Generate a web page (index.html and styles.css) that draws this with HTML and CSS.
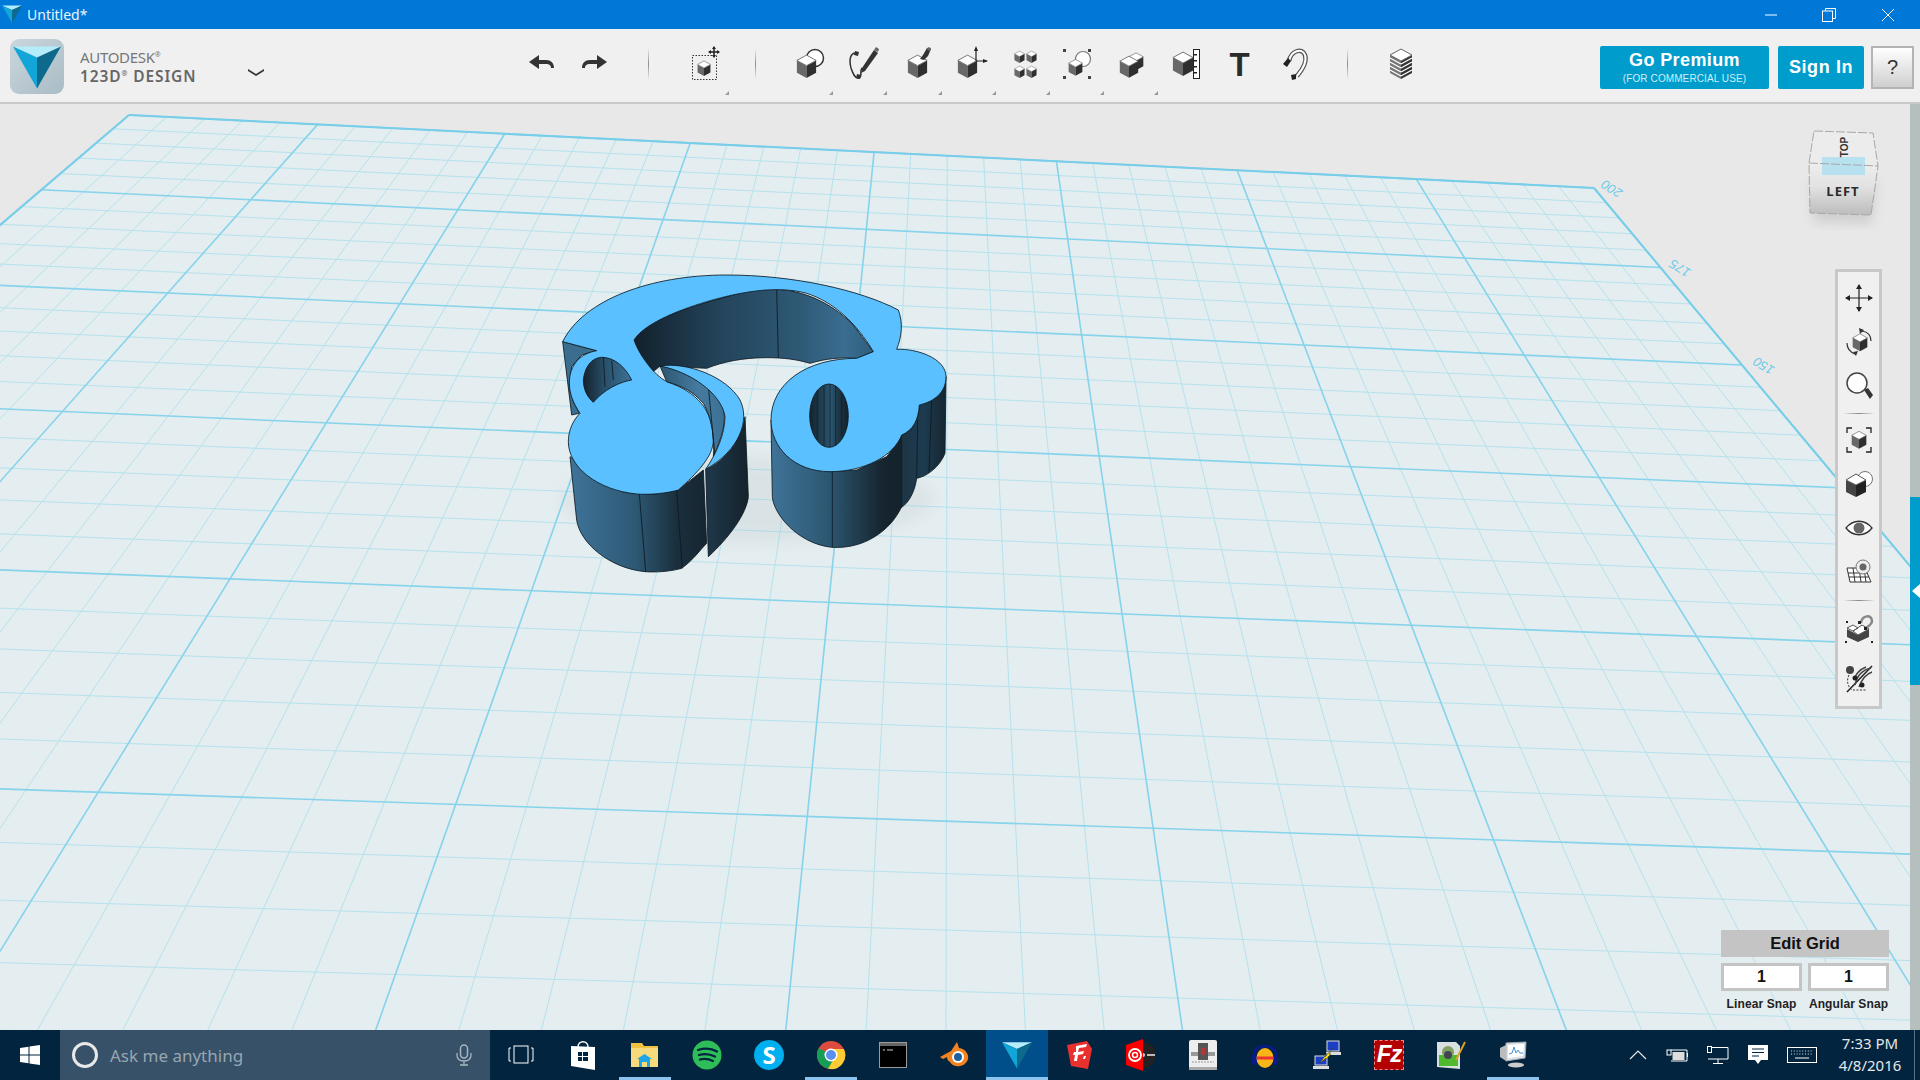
FILE: index.html
```html
<!DOCTYPE html>
<html lang="en">
<head>
<meta charset="utf-8">
<title>Untitled* - 123D Design</title>
<link rel="stylesheet" href="styles.css">
</head>
<body>
<svg class="defs" aria-hidden="true">
  <defs>
    <symbol id="cube" viewBox="0 0 24 28">
      <path d="M1 7 12 13V27L1 21Z" fill="#686868"/>
      <path d="M23 7 12 13V27L23 21Z" fill="#2f2f2f"/>
      <path d="M12 1 23 7 12 13 1 7Z" fill="#fff" stroke="#666" stroke-width="1"/>
    </symbol>
    <symbol id="logo" viewBox="0 0 40 40">
      <path d="M0 3H40L20 12Z" fill="#b5ecfa"/>
      <path d="M0 3 20 12V38Z" fill="#12a5d8"/>
      <path d="M40 3 20 12V38Z" fill="#0d6a8c"/>
    </symbol>
    <linearGradient id="wallA" gradientUnits="userSpaceOnUse" x1="90" y1="0" x2="520" y2="0">
      <stop offset="0" stop-color="#3f7398"/><stop offset=".45" stop-color="#2e5975"/><stop offset=".75" stop-color="#1a2e3c"/><stop offset="1" stop-color="#16252f"/>
    </linearGradient>
    <linearGradient id="wallB" gradientUnits="userSpaceOnUse" x1="490" y1="0" x2="625" y2="0">
      <stop offset="0" stop-color="#1f3a4c"/><stop offset="1" stop-color="#15222c"/>
    </linearGradient>
    <linearGradient id="wallC" gradientUnits="userSpaceOnUse" x1="693" y1="0" x2="1085" y2="0">
      <stop offset="0" stop-color="#3f7398"/><stop offset=".45" stop-color="#2c5670"/><stop offset=".85" stop-color="#16252f"/><stop offset="1" stop-color="#14222c"/>
    </linearGradient>
    <linearGradient id="wallD" gradientUnits="userSpaceOnUse" x1="1085" y1="0" x2="1218" y2="0">
      <stop offset="0" stop-color="#1d3546"/><stop offset=".5" stop-color="#1d3b4f"/><stop offset="1" stop-color="#16252f"/>
    </linearGradient>
    <linearGradient id="wallBack" gradientUnits="userSpaceOnUse" x1="282" y1="0" x2="1000" y2="0">
      <stop offset="0" stop-color="#12202b"/><stop offset=".35" stop-color="#23435a"/><stop offset=".7" stop-color="#2f5a76"/><stop offset=".88" stop-color="#3a6d90"/><stop offset="1" stop-color="#2f5f7d"/>
    </linearGradient>
    <linearGradient id="holeA" gradientUnits="userSpaceOnUse" x1="130" y1="0" x2="275" y2="0">
      <stop offset="0" stop-color="#14222c"/><stop offset=".45" stop-color="#28506a"/><stop offset="1" stop-color="#3e7295"/>
    </linearGradient>
    <linearGradient id="holeB" gradientUnits="userSpaceOnUse" x1="809" y1="0" x2="925" y2="0">
      <stop offset="0" stop-color="#14222c"/><stop offset=".55" stop-color="#2b5672"/><stop offset=".75" stop-color="#1d3647"/><stop offset="1" stop-color="#14222c"/>
    </linearGradient>
    <linearGradient id="inner" gradientUnits="userSpaceOnUse" x1="360" y1="0" x2="555" y2="0">
      <stop offset="0" stop-color="#2c5670"/><stop offset=".6" stop-color="#457ba0"/><stop offset="1" stop-color="#3c7093"/>
    </linearGradient>
    <linearGradient id="cubeFace" x1="0" y1="0" x2="0" y2="1">
      <stop offset="0" stop-color="#eeeeee"/><stop offset=".45" stop-color="#e2e2e2"/><stop offset="1" stop-color="#bcbcbc"/>
    </linearGradient>
    <filter id="soft" x="-30%" y="-30%" width="160%" height="160%"><feGaussianBlur stdDeviation="22"/></filter>
    <filter id="softS" x="-30%" y="-30%" width="160%" height="160%"><feGaussianBlur stdDeviation="6"/></filter>
  </defs>
</svg>

<div class="app">
  <header class="titlebar">
    <svg class="title-logo"><use href="#logo"/></svg>
    <span class="title-text">Untitled*</span>
    <div class="win-controls">
      <button class="win-btn"><svg width="14" height="14" viewBox="0 0 14 14"><path d="M1 7H13" stroke="#fff"/></svg></button>
      <button class="win-btn"><svg width="14" height="14" viewBox="0 0 14 14" fill="none" stroke="#fff"><path d="M3.500 2.500V.5H13.500V10.500H11"/><rect x=".5" y="3" width="10" height="10.500"/></svg></button>
      <button class="win-btn"><svg width="14" height="14" viewBox="0 0 14 14"><path d="M1 1 13 13M13 1 1 13" stroke="#fff"/></svg></button>
    </div>
  </header>

  <nav class="toolbar">
    <div class="brand">
      <div class="brand-mark"><svg class="brand-logo"><use href="#logo"/></svg></div>
      <div class="brand-text">
        <span class="brand-top">AUTODESK<sup>®</sup></span>
        <span class="brand-bottom">123D<sup>®</sup> DESIGN</span>
      </div>
      <svg class="brand-chevron" width="18" height="10" viewBox="0 0 18 10"><path d="M1 2 9 7 17 2 17 4 9 9 1 4Z" fill="#333"/></svg>
    </div>

    <div class="history">
      <svg width="28" height="18" viewBox="0 0 28 18"><path d="M1 8 11 1V6H18C23 6 26 9 26 14H23C23 11 21 10 18 10H11V15Z" fill="#333"/></svg>
      <svg width="28" height="18" viewBox="0 0 28 18"><path d="M27 8 17 1V6H10C5 6 2 9 2 14H5C5 11 7 10 10 10H17V15Z" fill="#333"/></svg>
    </div>
    <i class="sep sep-a"></i>
    <button class="tool tool-transform">
      <svg width="36" height="36" viewBox="0 0 36 36">
        <rect x="5.500" y="9.500" width="24" height="24" fill="none" stroke="#333" stroke-dasharray="1.500 1.500"/>
        <use href="#cube" x="10" y="14" width="14" height="17"/>
        <path d="M22 6H32M27 1V11" stroke="#222" stroke-width="1.500"/>
        <path d="M27 0 29 3H25ZM27 12 29 9H25ZM21 6 24 4V8ZM33 6 30 4V8Z" fill="#222"/>
      </svg>
      <i class="corner"></i>
    </button>
    <i class="sep"></i>

    <div class="tools">
      <button class="tool nudge"><svg width="36" height="36" viewBox="0 0 36 36"><circle cx="23" cy="12" r="8.500" fill="#fff" stroke="#333" stroke-width="1.500"/><use href="#cube" x="4" y="7" width="21" height="27"/></svg><i class="corner"></i></button>
      <button class="tool nudge"><svg width="36" height="36" viewBox="0 0 36 36"><path d="M10 7C4 7 3 14 5 22 7 28 9 33 13 32 17 30 13 26 16 22" fill="none" stroke="#333" stroke-width="1.500"/><path d="M9 5 13 6 12 10 8 9ZM11 28 15 29 14 33 10 32Z" fill="#333"/><path d="M28 4 32 7 19 25 15 27 16 22Z" fill="#333"/><path d="M30 1 33 3 32 6 28 4Z" fill="#666"/></svg><i class="corner"></i></button>
      <button class="tool nudge"><svg width="36" height="36" viewBox="0 0 36 36"><use href="#cube" x="7" y="7" width="21" height="27"/><path d="M20 13 23 9 27 2 31 3 28 10 24 14Z" fill="#333"/><path d="M28 1 31 2 30 5 27 4Z" fill="#666"/></svg><i class="corner"></i></button>
      <button class="tool nudge-s"><svg width="36" height="36" viewBox="0 0 36 36"><use href="#cube" x="4" y="7" width="21" height="27"/><path d="M23 2V15M23 15H34" stroke="#222" stroke-width="1.200"/><path d="M23 0 25 5H21ZM35 15 30 13V17Z" fill="#222"/></svg><i class="corner"></i></button>
      <button class="tool nudge-s"><svg width="36" height="36" viewBox="0 0 36 36"><use href="#cube" x="7" y="4" width="11" height="14"/><use href="#cube" x="19" y="4" width="11" height="14"/><use href="#cube" x="7" y="19" width="11" height="14"/><use href="#cube" x="19" y="19" width="11" height="14"/></svg><i class="corner"></i></button>
      <button class="tool"><svg width="36" height="36" viewBox="0 0 36 36"><circle cx="24" cy="13" r="7.500" fill="#fff" stroke="#777" stroke-width="1.200"/><use href="#cube" x="9" y="12" width="15" height="19"/><path d="M4 3h3v3h-3ZM29 3h3v3h-3ZM4 30h3v3h-3ZM29 30h3v3h-3Z" fill="#444"/></svg><i class="corner"></i></button>
      <button class="tool"><svg width="36" height="36" viewBox="0 0 36 36"><use href="#cube" x="15" y="4" width="16" height="23"/><use href="#cube" x="6" y="8" width="20" height="26"/></svg><i class="corner"></i></button>
      <button class="tool"><svg width="36" height="36" viewBox="0 0 36 36"><use href="#cube" x="5" y="2" width="22" height="32"/><rect x="26.500" y="3.500" width="6" height="29" fill="#fff" stroke="#222"/><path d="M27 8h3v1.500h-3ZM27 14h3v1.500h-3ZM27 20h3v1.500h-3ZM27 26h3v1.500h-3Z" fill="#222"/></svg></button>
      <button class="tool tool-text"><span>T</span></button>
      <button class="tool"><svg width="36" height="36" viewBox="0 0 36 36"><path d="M13 15C15 5 26 1 29 9 31 15 27 23 21 30" fill="none" stroke="#555" stroke-width="4.500"/><path d="M13 15C15 5 26 1 29 9 31 15 27 23 21 30" fill="none" stroke="#fff" stroke-width="2"/><path d="M7 18 12 12 15 15 11 21ZM15 29 20 28 20 33 16 34Z" fill="#222"/></svg></button>
    </div>
    <i class="sep sep-c"></i>
    <button class="tool tool-material">
      <svg width="36" height="36" viewBox="0 0 36 36"><path d="M7 9 18 15V33L7 27Z" fill="#777"/><path d="M29 9 18 15V33L29 27Z" fill="#333"/><path d="M7 12 18 18M7 16 18 22M7 20 18 26M7 24 18 30M29 12 18 18M29 16 18 22M29 20 18 26M29 24 18 30" stroke="#fff" stroke-width="1.300"/><path d="M18 3 29 9 18 15 7 9Z" fill="#fff" stroke="#666"/></svg>
    </button>

    <div class="account">
      <a class="btn-premium"><b>Go Premium</b><small>(FOR COMMERCIAL USE)</small></a>
      <a class="btn-signin">Sign In</a>
      <a class="btn-help">?</a>
    </div>
  </nav>

  <main class="workspace">
    <section class="viewport">
      <svg id="grid" class="grid" viewBox="0 104 1910 926" width="1910" height="926" aria-hidden="true"></svg>

      <svg class="model" viewBox="0 0 1260 960" width="420" height="320">
        <ellipse cx="620" cy="720" rx="560" ry="130" fill="#8fa0a6" opacity=".12" filter="url(#soft)"/>
        <g stroke="#0d1820" stroke-width="2.500" stroke-linejoin="round">
          <path fill="#3a6d8e" d="M68 245 170 272 125 285 95 320 88 380 100 425 118 460 95 465Z"/>
          <path fill="url(#wallBack)" d="M282 240 310 205C370 165 480 130 600 100 650 90 690 88 710 88 790 92 870 125 940 195L1000 275 950 295C900 292 860 295 810 310 770 298 730 293 680 293 610 293 550 305 500 325L360 318 340 335 300 280Z"/>
          <path fill="none" d="M710 88 715 293"/>
          <path fill="url(#wallB)" d="M497 628C540 610 600 560 615 470L625 710C620 760 570 830 505 890Z"/>
          <path fill="url(#wallA)" d="M90 590 110 780C120 850 210 925 315 935 360 938 400 932 425 925 460 900 480 870 500 850L490 630 415 690 340 703 250 697 170 660 110 605Z"/>
          <path fill="none" d="M298 700 317 935M410 692 427 925"/>
          <path fill="url(#wallC)" d="M693 480 697 710C700 760 770 850 875 862 970 868 1050 815 1085 740V530L1040 590 950 630 870 635 780 610 715 550Z"/>
          <path fill="none" d="M877 635V862"/>
          <path fill="url(#wallD)" d="M1085 525C1120 510 1135 480 1138 435 1180 425 1215 400 1218 350L1215 580C1200 620 1160 650 1130 655 1125 690 1110 725 1085 742Z"/>
          <path fill="none" d="M1133 480 1130 655M1175 420 1167 637"/>
          <path fill="#5ac0ff" d="M68 245C130 120 330 45 560 45 760 45 960 90 1075 150 1090 190 1085 230 1070 268 1130 265 1218 295 1218 350 1218 400 1180 425 1138 435 1135 480 1120 510 1085 525 1060 590 970 635 870 635 760 635 693 560 693 480 693 370 800 295 950 295L1000 275C950 190 880 125 800 100 720 78 620 90 500 125 400 155 310 195 282 240 295 280 340 345 380 365 470 395 520 450 520 540 520 590 470 640 415 690 380 700 330 705 290 702 170 690 85 620 85 545 85 510 100 480 120 460 100 430 88 400 88 370 88 310 125 280 170 272Z"/>
          <path fill="url(#holeA)" d="M275 360C240 365 190 390 160 427 140 410 130 385 130 360 135 315 160 290 190 292 225 295 255 320 275 360Z"/>
          <path fill="none" d="M190 292 195 380M215 302 220 360"/>
          <ellipse cx="867" cy="467" rx="58" ry="95" fill="url(#holeB)"/>
          <path fill="none" stroke-width="2" d="M832 390V540M852 376V558M870 372V562M887 378V556M905 400V530"/>
          <path fill="url(#inner)" d="M360 318C440 325 520 370 545 430 560 470 555 510 520 590 525 540 515 470 490 430 460 395 430 380 380 365Z"/>
          <path fill="none" d="M505 378 525 590"/>
          <path fill="#5ac0ff" d="M360 318C440 305 560 350 600 420 630 480 600 570 497 628 530 580 555 520 555 470 545 400 450 335 360 318Z"/>
        </g>
      </svg>

      <svg class="viewcube" viewBox="0 0 100 110" width="100" height="110">
        <path d="M11 61 76 62 72 104 13 102Z" fill="#777" opacity=".22" filter="url(#softS)"/>
        <path d="M14 11 73 13 78 46 9 43Z" fill="#ececec"/>
        <path d="M9 43 78 46 71 95 10 93Z" fill="url(#cubeFace)"/>
        <path d="M22 37H65V55H22Z" fill="#b8e1f0"/>
        <path d="M14 11 73 13 78 46 71 95 10 93 9 43ZM9 43 78 46" fill="none" stroke="#a8a8a8" stroke-dasharray="9 2"/>
        <text class="cube-top" transform="translate(48 27) rotate(-90)" text-anchor="middle">TOP</text>
        <text class="cube-left" x="43" y="76" text-anchor="middle">LEFT</text>
      </svg>

      <aside class="navbar">
        <button class="nav-btn"><svg width="30" height="30" viewBox="0 0 30 30"><path d="M2 15H28M15 2V28" stroke="#222" stroke-width="1.200"/><path d="M15 1 18 6H12ZM15 29 18 24H12ZM1 15 6 12V18ZM29 15 24 12V18Z" fill="#222"/></svg></button>
        <button class="nav-btn"><svg width="30" height="30" viewBox="0 0 30 30"><use href="#cube" x="8" y="6" width="16" height="19"/><path d="M18 4C24 5 27 9 27 14M11 27C6 25 3 22 3 16" fill="none" stroke="#333" stroke-width="1.200"/><path d="M15 1 20 3 16 7ZM9 25 14 24 12 29Z" fill="#333"/></svg></button>
        <button class="nav-btn"><svg width="30" height="30" viewBox="0 0 30 30"><circle cx="13" cy="12" r="10" fill="#fff" stroke="#444" stroke-width="1.500"/><path d="M20 19 24 17 29 24 26 28Z" fill="#333"/></svg></button>
        <i class="nav-sep"></i>
        <button class="nav-btn"><svg width="30" height="30" viewBox="0 0 30 30"><path d="M3 8V3H8M22 3H27V8M3 22V27H8M22 27H27V22" fill="none" stroke="#222" stroke-width="1.300"/><use href="#cube" x="7" y="5" width="16" height="20"/></svg></button>
        <button class="nav-btn"><svg width="30" height="30" viewBox="0 0 30 30"><circle cx="21" cy="10" r="7.500" fill="#fff" stroke="#777"/><path d="M2 11 12 16V28L2 23Z" fill="#444"/><path d="M22 11 12 16V28L22 23Z" fill="#222"/><path d="M12 5 22 11 12 16 2 11Z" fill="#fff" stroke="#555"/></svg></button>
        <button class="nav-btn"><svg width="30" height="30" viewBox="0 0 30 30"><path d="M2 15C9 6 21 6 28 15 21 24 9 24 2 15Z" fill="#fff" stroke="#333" stroke-width="1.300"/><circle cx="15" cy="15" r="5.500" fill="#666"/></svg></button>
        <button class="nav-btn"><svg width="30" height="30" viewBox="0 0 30 30"><path d="M3 11H21L27 25H6ZM9 11 11 25M15 11 17 25M20 11 22 25M4 16H24M5 20H25" fill="#fff" stroke="#333" stroke-width="1"/><circle cx="19" cy="10" r="7" fill="#eee" stroke="#777"/><circle cx="19" cy="10" r="3.500" fill="#666"/></svg></button>
        <i class="nav-sep nav-sep-b"></i>
        <button class="nav-btn"><svg width="30" height="30" viewBox="0 0 30 30"><path d="M3 15 14 21V28L3 23ZM25 15 14 21V28L25 23Z" fill="#444"/><path d="M9 11 14 14 9 17 3 14ZM18 11 25 15 14 21 9 17Z" fill="#fff" stroke="#555"/><path d="M17 9C18 1 28 0 28 7 28 10 25 12 22 14" fill="none" stroke="#888" stroke-width="2.500"/><path d="M14 7h3v3h-3ZM20 13h3v3h-3ZM2 7h2v2h-2ZM1 27h2v2h-2ZM27 27h2v2h-2Z" fill="#222"/></svg></button>
        <button class="nav-btn nav-last"><svg width="30" height="30" viewBox="0 0 30 30"><circle cx="6" cy="7" r="4" fill="#444"/><path d="M5 12C2 18 4 24 8 27H22" fill="none" stroke="#333" stroke-dasharray="2 1.500"/><path d="M3 29 28 3" stroke="#222" stroke-width="1.500"/><path d="M11 22C13 12 18 7 27 5M15 24C18 16 22 11 28 9M10 17C12 10 17 6 22 4" fill="none" stroke="#444" stroke-width="1.500"/><circle cx="11" cy="15" r="2.500" fill="#222"/><circle cx="18" cy="22" r="2.500" fill="#222"/></svg></button>
      </aside>

      <div class="snap">
        <button class="edit-grid">Edit Grid</button>
        <div class="snap-row">
          <div class="snap-col"><span class="snap-val">1</span><span class="snap-lbl">Linear Snap</span></div>
          <div class="snap-col"><span class="snap-val">1</span><span class="snap-lbl">Angular Snap</span></div>
        </div>
      </div>
    </section>
    <aside class="sidebar">
      <div class="side-tab"><i class="side-arrow"></i></div>
    </aside>
  </main>

  <footer class="taskbar">
    <button class="start"><svg width="20" height="20" viewBox="0 0 20 20"><path d="M0 3 8.500 1.800V9.500H0ZM9.500 1.600 20 0V9.500H9.500ZM0 10.500H8.500V18.200L0 17ZM9.500 10.500H20V20L9.500 18.400Z" fill="#fff"/></svg></button>
    <div class="search">
      <svg width="30" height="30" viewBox="0 0 30 30"><circle cx="15" cy="15" r="11.500" fill="none" stroke="#e8e8e8" stroke-width="3"/></svg>
      <span class="search-text">Ask me anything</span>
      <svg class="mic" width="16" height="22" viewBox="0 0 16 22"><rect x="4.500" y="1" width="7" height="13" rx="3.500" fill="none" stroke="#a9b5bf" stroke-width="1.500"/><path d="M1 9V11C1 15 4 17 8 17S15 15 15 11V9M8 17V21M4 21H12" fill="none" stroke="#a9b5bf" stroke-width="1.300"/></svg>
    </div>
    <div class="apps">
      <button class="app-btn"><svg width="26" height="22" viewBox="0 0 26 22" fill="none" stroke="#fff"><rect x="6" y="2" width="14" height="17"/><path d="M3 4H1V17H3M23 4H25V17H23"/></svg></button>
      <button class="app-btn"><svg width="28" height="32" viewBox="0 0 28 32"><path d="M9 8C9 1 19 1 19 8" fill="none" stroke="#fff" stroke-width="1.500"/><path d="M2 7 26 8V31L2 27Z" fill="#fff"/><path d="M9 13 13 13V17H9ZM14 13H19V17H14ZM9 18H13V22H9ZM14 18H19V22H14Z" fill="#002540"/></svg></button>
      <button class="app-btn on"><svg width="30" height="30" viewBox="0 0 30 30"><path d="M1 3H12L14 6H28V27H1Z" fill="#f0c040"/><rect x="1" y="8" width="27" height="19" fill="#f6da7c"/><path d="M9 27V19H20V27H17V22H12V27Z" fill="#1fa6e8"/><path d="M7 19 14.500 14 22 19Z" fill="#1fa6e8"/></svg></button>
      <button class="app-btn"><svg width="30" height="30" viewBox="0 0 30 30"><circle cx="15" cy="15" r="14.500" fill="#2ebd59"/><path d="M6 10C12 8 19 8 25 11.500M7 15C12 13.500 18 14 23 16.500M8 19.500C12 18.500 17 19 21 21" fill="none" stroke="#002540" stroke-width="2.300" stroke-linecap="round"/></svg></button>
      <button class="app-btn"><span class="skype">S</span></button>
      <button class="app-btn on"><svg width="30" height="30" viewBox="0 0 30 30"><circle cx="15" cy="15" r="14" fill="#dd4b3e"/><path d="M15 15 2.900 8A14 14 0 0 0 12 28.700L18 22Z" fill="#189d57"/><path d="M15 9H27.900A14 14 0 0 1 12 28.700L19 17Z" fill="#fdcb34"/><circle cx="15" cy="15" r="6.500" fill="#fff"/><circle cx="15" cy="15" r="5" fill="#5a8ff0"/></svg></button>
      <button class="app-btn"><svg width="28" height="26" viewBox="0 0 28 26"><rect x=".5" y=".5" width="27" height="25" fill="#000" stroke="#9a9a9a"/><rect x="1" y="1" width="26" height="3" fill="#666"/><path d="M4 8H6M8 8H14" stroke="#ccc"/></svg></button>
      <button class="app-btn"><svg width="30" height="28" viewBox="0 0 30 28"><path d="M0 16 11 10 17 1 19 7C26 8 29 14 28 18 26 26 14 28 10 21 8 20 7 18 7 16L3 18Z" fill="#f5821f"/><circle cx="18" cy="16" r="6" fill="#fff"/><circle cx="18" cy="16" r="4" fill="#1f5fa0"/></svg></button>
      <button class="app-btn active"><svg class="task-logo"><use href="#logo"/></svg></button>
      <button class="app-btn"><svg width="26" height="30" viewBox="0 0 26 30"><path d="M1 5 21 1 26 9 22 29 5 26Z" fill="#e8312f"/><path d="M10 6 21 4 20 7 13 8 12 12 18 11 17 14 12 15 11 21H8L9 15 7 15 8 12H10ZM18 16 20 16 19 19 17 19Z" fill="#fff"/></svg></button>
      <button class="app-btn"><svg width="30" height="32" viewBox="0 0 30 32"><circle cx="17" cy="16" r="13" fill="#222"/><circle cx="17" cy="16" r="2" fill="#ddd"/><path d="M21 16h8" stroke="#bbb" stroke-width="2"/><path d="M0 6 17 0V32L0 26Z" fill="#fb0000"/><circle cx="9" cy="16" r="6" fill="none" stroke="#fff" stroke-width="1.800"/><circle cx="9" cy="16" r="2.500" fill="none" stroke="#fff" stroke-width="1.500"/></svg></button>
      <button class="app-btn"><svg width="28" height="30" viewBox="0 0 28 30"><rect width="28" height="30" rx="2" fill="#eee"/><rect y="27" width="28" height="3" fill="#aaa"/><path d="M2 12H26V16H2Z" fill="#999"/><rect x="9" y="3" width="10" height="17" fill="#555"/><rect x="12" y="8" width="4" height="7" fill="#b33"/><path d="M3 22H25" stroke="#999" stroke-dasharray="2 1"/></svg></button>
      <button class="app-btn"><svg width="28" height="30" viewBox="0 0 28 30"><path d="M3 18C0 2 28 2 25 18" fill="none" stroke="#0a1a8c" stroke-width="2.500"/><rect x="1" y="15" width="5" height="10" rx="2" fill="#0a1a8c"/><rect x="22" y="15" width="5" height="10" rx="2" fill="#0a1a8c"/><ellipse cx="14" cy="18" rx="8.500" ry="10" fill="#f7b518"/><path d="M6 18H22" stroke="#e33" stroke-width="3"/></svg></button>
      <button class="app-btn"><svg width="30" height="30" viewBox="0 0 30 30"><rect x="15" y="1" width="12" height="10" fill="#1a3fc4" stroke="#ddd"/><path d="M14 12H29V15H14Z" fill="#ddd"/><rect x="3" y="16" width="12" height="9" fill="#1a3fc4" stroke="#ddd"/><path d="M1 26H17V29H1Z" fill="#ddd"/><path d="M8 23 15 13 13 17 21 8 17 14 19 14 12 21 14 18Z" fill="#ffe21a" stroke="#333" stroke-width=".5"/></svg></button>
      <button class="app-btn"><span class="fz">Fz</span></button>
      <button class="app-btn"><svg width="30" height="30" viewBox="0 0 30 30"><path d="M1 2H20L24 6V29L1 27Z" fill="#d9e0e0"/><rect x="3" y="15" width="19" height="11" fill="#4fb82e"/><circle cx="12" cy="12" r="6" fill="#82a060"/><circle cx="12" cy="15" r="4" fill="#445"/><path d="M20 20 29 2" stroke="#d9a020" stroke-width="2"/></svg></button>
      <button class="app-btn on"><svg width="30" height="28" viewBox="0 0 30 28"><path d="M8 2 28 1 27 17 8 20Z" fill="#dbe2e8" stroke="#aaa"/><path d="M10 4 26 3 25 15 10 17Z" fill="#fff"/><path d="M11 13 14 12 16 6 18 12 20 9 22 12 25 12" fill="none" stroke="#4b8fd0"/><path d="M2 7 8 4V20L2 16Z" fill="#bbb"/><ellipse cx="18" cy="24" rx="8" ry="2.500" fill="#ccc"/></svg></button>
    </div>
    <div class="tray">
      <svg width="18" height="10" viewBox="0 0 18 10"><path d="M1 9 9 1 17 9" fill="none" stroke="#e8e8e8" stroke-width="1.200"/></svg>
      <svg width="22" height="16" viewBox="0 0 22 16"><path d="M5 3H21V14H5" fill="none" stroke="#fff"/><rect x="6.500" y="5" width="12" height="8" fill="#ddd"/><rect x="21" y="6" width="1" height="4" fill="#fff"/><rect x="1" y="3" width="4" height="5" fill="none" stroke="#fff"/></svg>
      <svg width="22" height="18" viewBox="0 0 22 18" fill="none" stroke="#fff"><path d="M5 1.500H21V13H1"/><path d="M11 13V17M6 17.500H16"/><rect x=".5" y=".5" width="4" height="6"/></svg>
      <svg width="20" height="20" viewBox="0 0 20 20"><path d="M0 0H20V15H13L10 19 7 15H0Z" fill="#fff"/><path d="M4 4H16M4 7.500H16M4 11H11" stroke="#002540"/></svg>
      <svg width="30" height="16" viewBox="0 0 30 16"><rect x=".5" y=".5" width="29" height="15" fill="none" stroke="#fff"/><path d="M4 4H26M4 7H26" stroke="#ddd" stroke-dasharray="1 1.800"/><path d="M8 11H22" stroke="#fff"/></svg>
      <div class="clock"><span>7:33 PM</span><span>4/8/2016</span></div>
      <i class="show-desktop"></i>
    </div>
  </footer>
</div>
<script src="script.js"></script>
</body>
</html>
```

FILE: styles.css
```css
* { box-sizing: border-box; }
html, body { margin: 0; height: 100%; overflow: hidden; }
body { font-family: "Liberation Sans", Arial, sans-serif; background: #e8e8e8; }
button { border: 0; padding: 0; background: none; font: inherit; color: inherit; }
sup { font-size: 7px; vertical-align: 6px; line-height: 0; }

.defs { position: absolute; width: 0; height: 0; }
.app { display: flex; flex-direction: column; height: 100vh; }

/* title bar */
.titlebar { flex: 0 0 29px; display: flex; align-items: center; background: #0078d7; color: #fff; }
.title-logo { width: 20px; height: 22px; margin: 3px 5px 0 2px; align-self: flex-start; }
.title-text { font: 14px "Noto Sans", sans-serif; color: #eaf4fc; }
.win-controls { margin-left: auto; margin-right: 3px; display: flex; }
.win-btn { width: 58.500px; height: 29px; display: flex; align-items: center; justify-content: center; }

/* toolbar */
.toolbar { flex: 0 0 75px; display: flex; align-items: flex-start; background: #f0f0f0; border-bottom: 2px solid #c9c9c9; position: relative; }
.brand { flex: 0 0 265px; display: flex; align-items: center; height: 73px; padding-left: 10px; }
.brand-mark { width: 54px; height: 55px; border-radius: 9px; background: linear-gradient(135deg, #cbd6dc, #a9bcc6); overflow: hidden; display: flex; align-items: center; justify-content: center; margin-top: 2px; }
.brand-logo { width: 48px; height: 48px; }
.brand-text { display: flex; flex-direction: column; margin-left: 16px; white-space: nowrap; margin-top: 2px; }
.brand-top { font: 15px/19px "Noto Sans", sans-serif; letter-spacing: -.3px; color: #777; }
.brand-bottom { font: 600 15.500px/19px "Noto Sans", sans-serif; letter-spacing: .9px; color: #666; }
.brand-chevron { margin-left: auto; margin-top: 13px; }

.history { display: flex; gap: 24px; margin: 25px 0 0 263px; }
.sep { flex: 0 0 1px; height: 32px; background: linear-gradient(#f0f0f0, #8c8c8c 50%, #f0f0f0); margin-top: 19px; }
.sep-a { margin-left: 40px; }
.sep-c { margin-left: 26px; }

.tool { position: relative; flex: 0 0 54.200px; height: 73px; display: flex; justify-content: center; padding-top: 17px; }
.tool-transform { flex-basis: 106px; }
.tool-transform svg { margin-left: 6px; }
.nudge svg { margin-left: 8px; }
.nudge-s svg { margin-left: 4px; }
.tools { display: flex; margin-left: 23px; }
.corner { position: absolute; right: 0; bottom: 7px; width: 0; height: 0; border-left: 4px solid transparent; border-bottom: 4px solid #999; }
.tool-transform .corner { right: 26px; }
.tool-text span { font: bold 33px/38px "Liberation Sans", sans-serif; color: #2b2b2b; }
.tool-material { margin-left: 26px; flex-basis: 54px; }

.account { position: absolute; right: 6px; top: 17px; display: flex; gap: 9px; }
.btn-premium, .btn-signin { background: #009ccc; color: #fff; border-radius: 2px; height: 43px; display: flex; flex-direction: column; align-items: center; justify-content: center; }
.btn-premium { width: 169px; }
.btn-premium b { font-size: 18px; line-height: 22px; letter-spacing: .4px; }
.btn-premium small { font-size: 10px; line-height: 16px; color: #cfeef8; letter-spacing: .1px; }
.btn-signin { width: 86px; font-weight: bold; font-size: 18px; letter-spacing: .6px; }
.btn-help { width: 43px; height: 43px; margin-left: -2px; border: 2px solid #b4b4b4; background: linear-gradient(#fff, #cfcfcf); color: #333; font-size: 20px; display: flex; align-items: center; justify-content: center; }

/* workspace */
.workspace { flex: 1; display: flex; min-height: 0; }
.viewport { flex: 1; position: relative; overflow: hidden; background: #e8e8e8; }
.grid { position: absolute; left: 0; top: 0; }
.grid-label { font: italic 13px "Liberation Sans", sans-serif; fill: #6ccbe8; }
.model { position: absolute; left: 540px; top: 156px; }
.viewcube { position: absolute; left: 1800px; top: 16px; }
.cube-top { font: bold 10px "Liberation Sans", sans-serif; fill: #333; }
.cube-left { font: bold 13px "Open Sans", sans-serif; fill: #2a2a2a; letter-spacing: 1px; }

.navbar { position: absolute; left: 1835px; top: 165px; width: 47px; height: 440px; background: #f0f0f0; border: 3px solid #c8c8c8; display: flex; flex-direction: column; align-items: center; padding-top: 4px; }
.nav-btn { flex: 0 0 44px; height: 44px; width: 100%; display: flex; align-items: center; justify-content: center; }
.nav-sep { flex: 0 0 1px; width: 32px; background: linear-gradient(90deg, #f0f0f0, #888, #f0f0f0); margin: 5px 0 4px; }
.nav-sep-b { margin: 6px 0 6px; }
.nav-last { margin-top: 5px; }

.snap { position: absolute; left: 1721px; top: 826px; width: 168px; display: flex; flex-direction: column; gap: 6px; }
.edit-grid { height: 27px; background: #c4c4c4; font-weight: bold; font-size: 16.500px; color: #111; }
.snap-row { display: flex; justify-content: space-between; }
.snap-col { width: 81px; display: flex; flex-direction: column; align-items: center; gap: 6px; }
.snap-val { width: 100%; height: 28px; background: #fff; border: 3px solid #c4c4c4; text-align: center; font-weight: bold; font-size: 16px; line-height: 22px; color: #111; }
.snap-lbl { font-weight: bold; font-size: 12px; line-height: 14px; color: #222; white-space: nowrap; letter-spacing: .1px; }

.sidebar { flex: 0 0 10px; background: #b4bfbe; padding-top: 393px; }
.side-tab { height: 188px; background: #009ccc; display: flex; align-items: center; }
.side-arrow { width: 0; height: 0; border: 7px solid transparent; border-left: 0; border-right: 8px solid #fff; margin-left: 2px; }

/* taskbar */
.taskbar { flex: 0 0 50px; display: flex; background: #02243e; color: #fff; }
.start { flex: 0 0 60px; display: flex; align-items: center; justify-content: center; }
.search { flex: 0 0 430px; display: flex; align-items: center; background: #365168; padding-left: 10px; }
.search-text { font: 17px "Noto Sans", sans-serif; color: #98a6b2; margin-left: 10px; }
.mic { margin-left: auto; margin-right: 18px; }
.apps { display: flex; }
.app-btn { position: relative; width: 62px; height: 50px; display: flex; align-items: center; justify-content: center; }
.app-btn.on::after, .app-btn.active::after { content: ""; position: absolute; left: 5px; right: 5px; bottom: 0; height: 3px; background: #8cc4ef; }
.app-btn.active { background: #004f8b; }
.app-btn.active::after { left: 0; right: 0; }
.task-logo { width: 30px; height: 32px; }
.skype { width: 30px; height: 30px; border-radius: 50%; background: #00aff0; color: #fff; font: bold 24px/30px "Open Sans", sans-serif; text-align: center; }
.fz { width: 30px; height: 30px; background: #b30000; outline: 1px dashed #e88; outline-offset: -1px; color: #fff; font: italic bold 24px/28px "Liberation Sans", sans-serif; text-align: center; letter-spacing: -1px; }
.tray { flex: 1; display: flex; align-items: center; position: relative; padding-left: 85px; gap: 19px; }
.clock { position: absolute; left: 281px; top: 2px; width: 90px; display: flex; flex-direction: column; align-items: center; font: 15px/22px "Noto Sans", sans-serif; color: #e4e8ec; }
.show-desktop { position: absolute; right: 5px; top: 0; bottom: 0; width: 1px; background: #5a7080; }
```

FILE: script.js
```js
// Perspective grid of the 123D Design workplane: 200 x 200 units, minor cell 5, major cell 25.
function project(s, t) {
  var d = 1 + 0.035 * s - 0.0965 * t;
  return [
    (129 + s * (1594 * 1.035 - 129) - 91.5 * t) / d,
    (115 + s * (188 * 1.035 - 115) + 56.4 * t) / d
  ];
}
var NS = "http://www.w3.org/2000/svg";
var svg = document.getElementById("grid");
var TMAX = 8;
function add(name, attrs) {
  var el = document.createElementNS(NS, name);
  for (var k in attrs) el.setAttribute(k, attrs[k]);
  svg.appendChild(el);
  return el;
}
function line(a, b, major) {
  add("line", {
    x1: a[0].toFixed(2), y1: a[1].toFixed(2), x2: b[0].toFixed(2), y2: b[1].toFixed(2),
    stroke: major ? "#86d3eb" : "#b5e2ee", "stroke-width": major ? 1.6 : 1
  });
}
var corners = [project(0, 0), project(1, 0), project(1, TMAX), project(0, TMAX)];
add("polygon", { points: corners.map(function (p) { return p.join(","); }).join(" "), fill: "#e4edef" });
for (var pass = 0; pass < 2; pass++) {
  for (var i = 0; i <= 40; i++) {
    var major = i % 5 === 0;
    if (major === (pass === 1)) {
      line(project(i / 40, 0), project(i / 40, TMAX), major);
      line(project(0, i / 5), project(1, i / 5), major);
    }
  }
}
var edges = [[corners[0], corners[1]], [corners[0], corners[3]], [corners[1], corners[2]]];
edges.forEach(function (e) {
  add("line", { x1: e[0][0], y1: e[0][1], x2: e[1][0], y2: e[1][1], stroke: "#78cde9", "stroke-width": 2 });
});
[["200", 0], ["175", 1], ["150", 2]].forEach(function (l, n) {
  var p = project(1, l[1]);
  var label = add("text", {
    "class": "grid-label", "text-anchor": "middle",
    transform: "translate(" + (p[0] + 20 + n * 2) + " " + (p[1] - 3) + ") rotate(212)"
  });
  label.textContent = l[0];
});
```
